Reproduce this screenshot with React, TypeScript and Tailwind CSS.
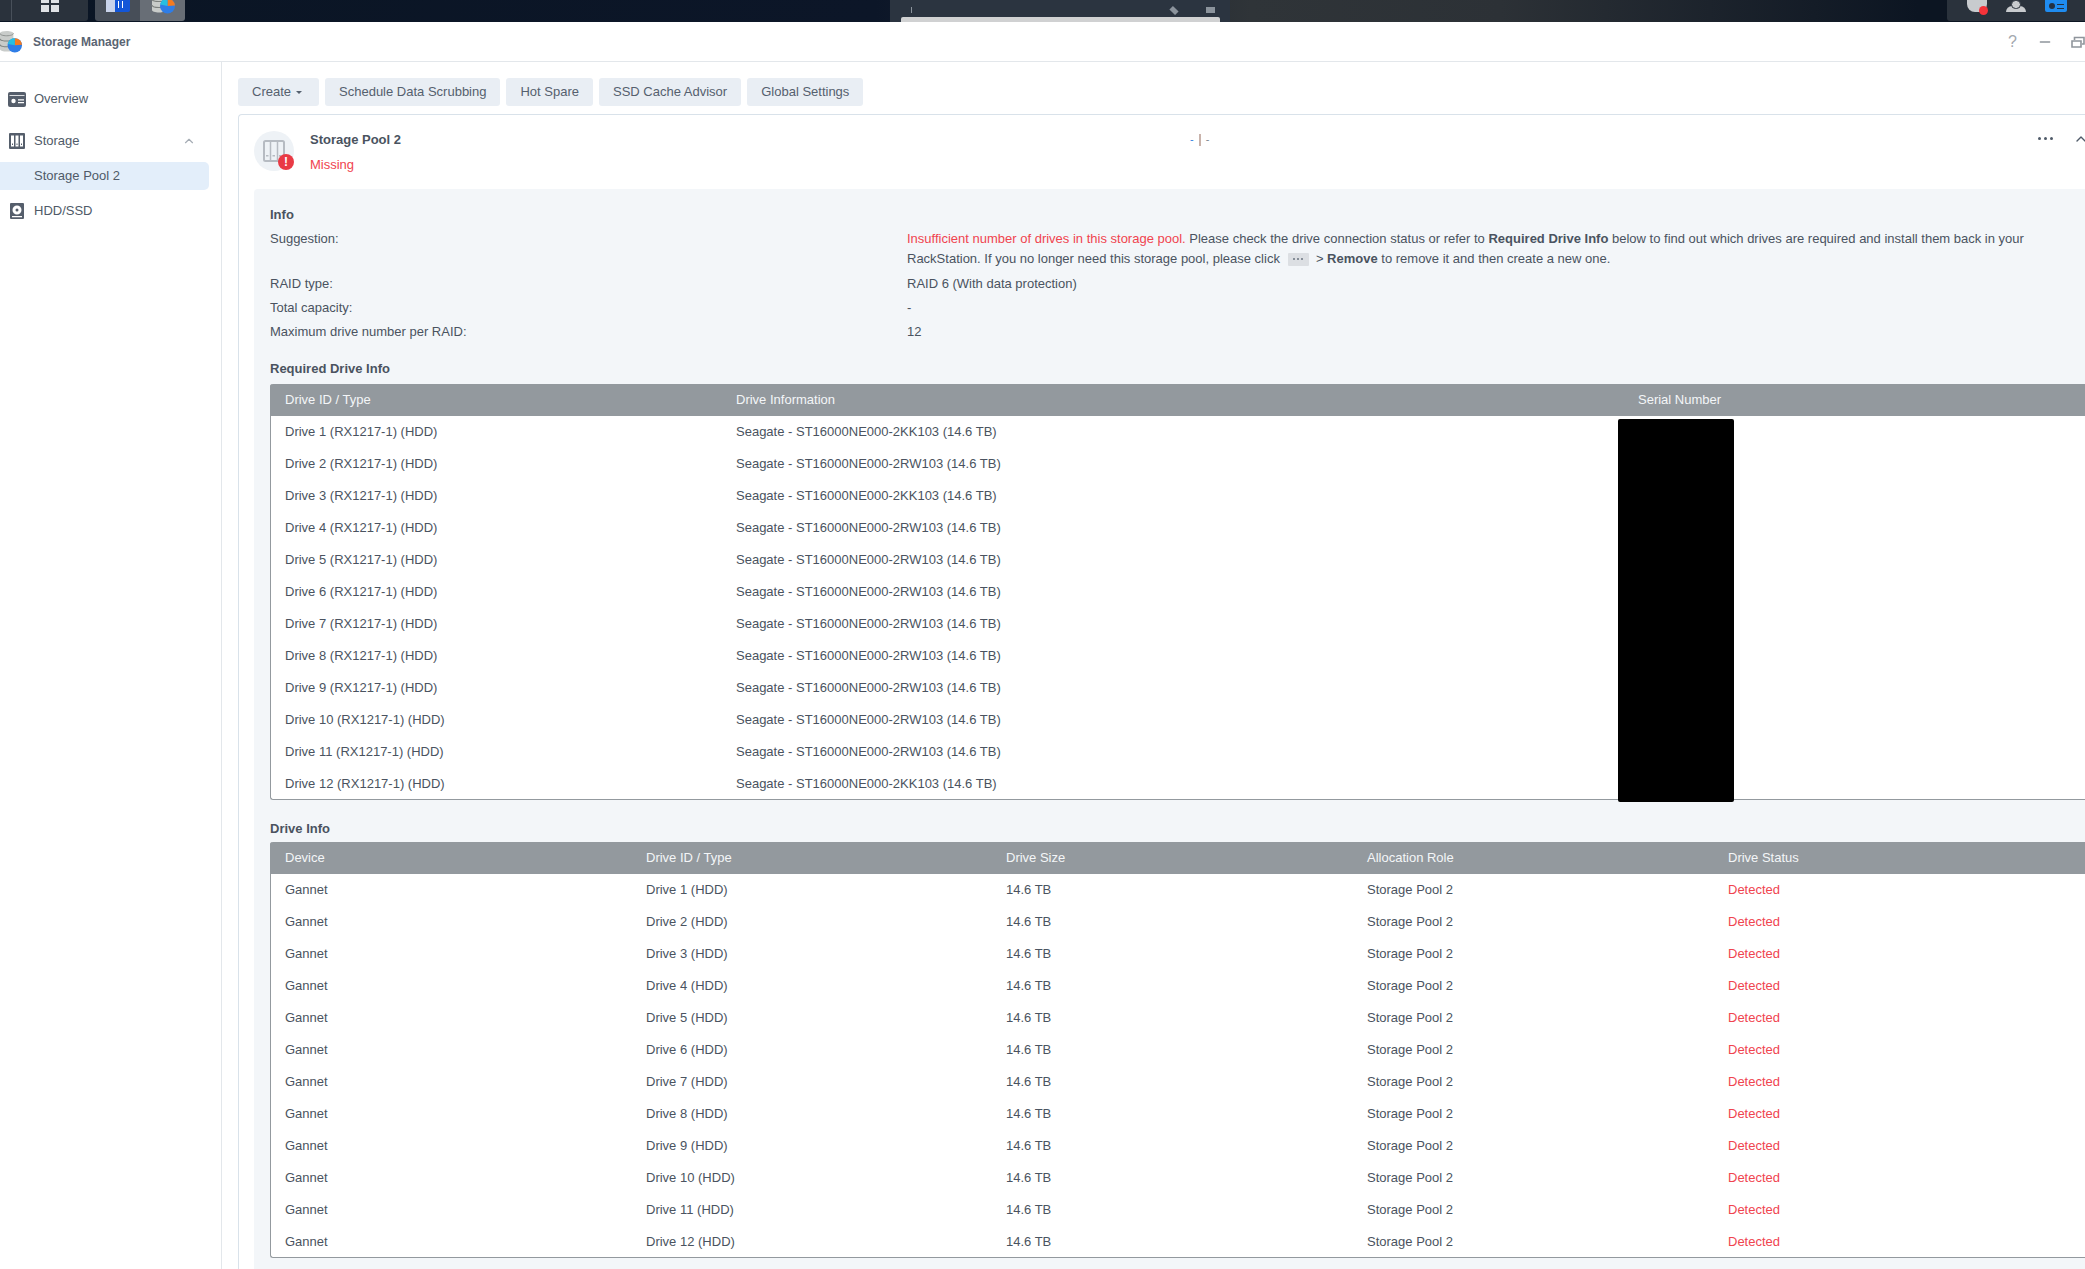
import { ChevronUp, Minus } from 'lucide-react'

const requiredDrives = [
  '2KK103', '2RW103', '2KK103', '2RW103', '2RW103', '2RW103',
  '2RW103', '2RW103', '2RW103', '2RW103', '2RW103', '2KK103',
]

function DbIcon({ className }: { className: string }) {
  return (
    <svg viewBox="0 0 24 24" className={className} aria-hidden="true">
      <path d="M1 3.5C1 2 4 1 8 1s7 1 7 2.500V20c0 1.500-3 2.500-7 2.500S1 21.500 1 20z" fill="#c9ccca" />
      <path d="M1 3.500C1 5 4 6 8 6s7-1 7-2.500" fill="none" stroke="#8d918f" strokeWidth="1" />
      <path d="M1 9c0 1.500 3 2.500 7 2.500S15 10.500 15 9M1 15c0 1.500 3 2.500 7 2.500s7-1 7-2.500" fill="none" stroke="#7d817f" strokeWidth="1.200" />
      <circle cx="16.500" cy="16" r="7.500" fill="#2f7de6" />
      <path d="M16.500 16V8.500a7.500 7.500 0 0 1 7.500 7z" fill="#f47b20" />
      <path d="M16.500 16 9.200 14.500a7.500 7.500 0 0 1 7.300-6z" fill="#27bfe0" />
    </svg>
  )
}

function TopBar() {
  return (
    <div className="flex h-[22px] overflow-hidden bg-[linear-gradient(90deg,#0a1524_0%,#0c1628_42%,#2f3438_60%,#2c3136_72%,#0c1522_92%)]">
      <div className="flex h-[21px] w-[88px] items-end rounded-br-[3px] bg-[#2a323c]">
        <div className="ml-[11px] h-full w-px bg-[#48505a]" />
        <div className="mb-[9px] ml-[29px] grid w-[18px] grid-cols-2 gap-[2px]">
          <span className="h-[3px] w-[8px] bg-[#dfe2e5]" />
          <span className="h-[3px] w-[8px] bg-[#dfe2e5]" />
          <span className="h-[7px] w-[8px] bg-[#dfe2e5]" />
          <span className="h-[7px] w-[8px] bg-[#dfe2e5]" />
        </div>
      </div>
      <div className="ml-[7px] flex h-[21px] w-[90px] overflow-hidden rounded-b-[3px]">
        <div className="flex w-[45px] items-start justify-center bg-[#474e58]">
          <div className="flex h-[12px] w-[24px] rounded-b-[2px] bg-[#1356d8]">
            <span className="w-[9px] bg-[#c9d3ea]" />
            <span className="ml-[3px] mt-[1px] h-[7px] w-px bg-white" />
            <span className="ml-[3px] mt-[1px] h-[7px] w-px bg-white" />
          </div>
        </div>
        <div className="flex w-[45px] items-start justify-center bg-[#686e76]">
          <DbIcon className="-mt-[10px] h-[24px] w-[24px]" />
        </div>
      </div>
      <div className="ml-[705px] flex h-[22px] w-[340px] flex-col items-center justify-end bg-[#2b3440]">
        <div className="mb-[4px] flex w-[320px] items-end pr-[5px] pl-[11px]">
          <span className="h-[6px] w-px bg-[#8b939c]" />
          <span className="ml-auto h-[5px] w-[8px] rotate-45 bg-[#8b939c]" />
          <span className="ml-[28px] h-[6px] w-[9px] bg-[#8b939c]" />
        </div>
        <div className="h-[5px] w-[319px] rounded-t-[2px] bg-[#d0d1d2]" />
      </div>
      <div className="ml-auto flex h-[21px] w-[138px] items-end rounded-bl-[3px] bg-[#2a323c]">
        <div className="relative mb-[9px] ml-[20px] h-[12px] w-[20px] rounded-b-[8px] bg-[#c8cbce]">
          <span className="absolute -bottom-[3px] left-[12px] h-[9px] w-[9px] rounded-full bg-[#f5333a]" />
        </div>
        <div className="relative mb-[9px] ml-[19px] h-[6px] w-[20px] rounded-t-[6px] bg-[#c8cbce]">
          <span className="absolute -top-[6px] left-[5px] h-[9px] w-[10px] rounded-full border border-[#2a323c] bg-[#c8cbce]" />
        </div>
        <div className="mb-[9px] ml-[19px] flex h-[12px] w-[22px] items-center gap-[2px] rounded-b-[2px] bg-[#1f8cf0] pl-[4px]">
          <span className="h-[6px] w-[6px] rounded-full bg-[#243142]" />
          <span className="h-[5px] w-[7px] border-y border-[#243142]" />
        </div>
      </div>
    </div>
  )
}

function SideItem({ icon, label, active }: { icon?: React.ReactNode; label: string; active?: boolean }) {
  return (
    <div className={`flex h-[28px] items-center text-[13px] text-[#4f5a68] ${active ? 'mr-3 rounded-r-[5px] bg-[#e3eefa]' : ''}`}>
      <span className="flex w-[34px] justify-center">{icon}</span>
      {label}
    </div>
  )
}

function Sidebar() {
  return (
    <aside className="w-[222px] shrink-0 border-r border-[#e3e7eb] pt-[23px]">
      <SideItem
        label="Overview"
        icon={
          <svg viewBox="0 0 18 15" className="h-[15px] w-[18px]" aria-hidden="true">
            <rect width="18" height="15" rx="2" fill="#555e6b" />
            <path d="M1.500 3.500h15" stroke="#fff" strokeWidth="0.800" />
            <circle cx="5.500" cy="9" r="2.200" fill="#fff" />
            <path d="M10 7.200h6v1.300h-6zM10 10h6v1.300h-6z" fill="#fff" />
          </svg>
        }
      />
      <div className="mt-[14px] flex items-center pr-[25px]">
        <div className="flex-1">
          <SideItem
            label="Storage"
            icon={
              <svg viewBox="0 0 16 16" className="h-[16px] w-[16px]" aria-hidden="true">
                <path fillRule="evenodd" d="M1 0h14a1 1 0 0 1 1 1v14a1 1 0 0 1-1 1H1a1 1 0 0 1-1-1V1a1 1 0 0 1 1-1zM2 2.500v11h3v-11zM6.500 2.500v11h3v-11zM11 2.500v11h3v-11z" fill="#555e6b" />
                <path d="M3 10.500h1V12H3zM7.500 10.500h1V12h-1zM12 10.500h1V12h-1z" fill="#555e6b" />
              </svg>
            }
          />
        </div>
        <ChevronUp className="h-[14px] w-[14px] text-[#a6adb5]" strokeWidth={2} aria-hidden="true" />
      </div>
      <div className="mt-[7px]">
        <SideItem label="Storage Pool 2" active />
      </div>
      <div className="mt-[7px]">
        <SideItem
          label="HDD/SSD"
          icon={
            <svg viewBox="0 0 14 16" className="h-[16px] w-[14px]" aria-hidden="true">
              <path fillRule="evenodd" d="M1 0h12a1 1 0 0 1 1 1v14a1 1 0 0 1-1 1H1a1 1 0 0 1-1-1V1a1 1 0 0 1 1-1zM7 2.500a4.500 4.500 0 1 0 0 9 4.500 4.500 0 0 0 0-9zM7 5.500a1.500 1.500 0 1 1 0 3 1.500 1.500 0 0 1 0-3zM2 13v1.200h10V13z" fill="#555e6b" />
            </svg>
          }
        />
      </div>
    </aside>
  )
}

function DriveTables() {
  return (
    <>
      <h3 className="mt-[20px] text-[13px] leading-[17px] font-bold">Required Drive Info</h3>
      <div className="relative mt-[7px] h-[416px] rounded-[3px] border-b border-l border-[#93999e] bg-white">
        <div className="-ml-px grid h-8 grid-cols-[451px_902px_1fr] items-center rounded-t-[3px] bg-[#93999e] pl-[14px] text-[#f4f6f8]">
          <span className="pl-px">Drive ID / Type</span>
          <span className="pl-px">Drive Information</span>
          <span className="pl-px">Serial Number</span>
        </div>
        {requiredDrives.map((model, i) => (
          <div key={i} className="-ml-px grid h-8 grid-cols-[451px_902px_1fr] items-center pl-[14px]">
            <span className="pl-px">Drive {i + 1} (RX1217-1) (HDD)</span>
            <span className="pl-px">Seagate - ST16000NE000-{model} (14.6 TB)</span>
            <span />
          </div>
        ))}
        {/* redaction block over the serial numbers */}
        <div className="absolute top-[35px] left-[1347px] h-[383px] w-[116px] rounded-[2px] bg-black" />
      </div>

      <h3 className="mt-[20px] text-[13px] leading-[17px] font-bold">Drive Info</h3>
      <div className="mt-[5px] h-[416px] rounded-[3px] border-b border-l border-[#93999e] bg-white">
        <div className="-ml-px grid h-8 grid-cols-[361px_360px_361px_361px_1fr] items-center rounded-t-[3px] bg-[#93999e] pl-[15px] text-[#f4f6f8]">
          <span>Device</span>
          <span>Drive ID / Type</span>
          <span>Drive Size</span>
          <span>Allocation Role</span>
          <span>Drive Status</span>
        </div>
        {requiredDrives.map((_, i) => (
          <div key={i} className="-ml-px grid h-8 grid-cols-[361px_360px_361px_361px_1fr] items-center pl-[15px]">
            <span>Gannet</span>
            <span>Drive {i + 1} (HDD)</span>
            <span>14.6 TB</span>
            <span>Storage Pool 2</span>
            <span className="text-[#f0444f]">Detected</span>
          </div>
        ))}
      </div>
    </>
  )
}

function PoolCard() {
  return (
    <section className="mt-2 w-[2000px] rounded-tl-[4px] border-t border-l border-[#d9e2ea] pt-4 pl-[15px]">
      <div className="flex h-[40px] items-start">
        <div className="relative flex h-[40px] w-[40px] shrink-0 items-center justify-center rounded-full bg-[#eef2f6]">
          <svg viewBox="0 0 22 22" className="h-[22px] w-[22px]" aria-hidden="true">
            <rect x="1" y="1" width="20" height="20" rx="1.500" fill="none" stroke="#b6bbc2" strokeWidth="2" />
            <path d="M7.500 1v20M14.500 1v20" stroke="#b6bbc2" strokeWidth="1.500" />
            <path d="M3 15h2.500v1.500H3zM9.500 15H12v1.500H9.500zM16 15h2.500v1.500H16z" fill="#b6bbc2" />
          </svg>
          <span className="absolute right-0 bottom-[1px] flex h-4 w-4 items-center justify-center rounded-full bg-[#e93a45] text-[12px] leading-none font-bold text-white">!</span>
        </div>
        <div className="ml-4 w-[880px]">
          <h2 className="text-[13px] leading-[17px] font-bold">Storage Pool 2</h2>
          <p className="mt-[8px] leading-[17px] text-[#f0444f]">Missing</p>
        </div>
        <div className="flex items-center text-[11px] leading-[17px]">
          <span className="text-[#2f7fe0]">-</span>
          <span className="mx-[5px] h-[12px] w-[2px] bg-[#c9b3ab]" />
          <span className="text-[#7d8791]">-</span>
        </div>
        <div className="mt-[6px] ml-[829px] flex gap-[3px]">
          <span className="h-[3px] w-[3px] rounded-full bg-[#4f5a68]" />
          <span className="h-[3px] w-[3px] rounded-full bg-[#4f5a68]" />
          <span className="h-[3px] w-[3px] rounded-full bg-[#4f5a68]" />
        </div>
        <ChevronUp className="ml-[20px] h-[16px] w-[16px] text-[#4f5a68]" strokeWidth={2} aria-hidden="true" />
      </div>

      <div className="mt-[18px] rounded-tl-[4px] bg-[#f3f6f9] px-4 pt-[17px] pb-[12px]">
        <h3 className="text-[13px] leading-[17px] font-bold">Info</h3>
        <div className="mt-[7px] grid grid-cols-[637px_1fr] gap-y-[7px] leading-[17px]">
          <span>Suggestion:</span>
          <p className="-my-px leading-5">
            <span className="text-[#f0444f]">Insufficient number of drives in this storage pool.</span> Please check the drive connection status or refer to <b>Required Drive Info</b> below to find out which drives are required and install them back in your
            <br />
            RackStation. If you no longer need this storage pool, please click
            <span className="mr-[7px] ml-[8px] inline-flex h-[13px] w-[21px] items-center justify-center gap-[2px] rounded-[1px] bg-[#dcdfe3] align-[3px]">
              <i className="h-[2px] w-[2px] rounded-full bg-[#6b7480]" />
              <i className="h-[2px] w-[2px] rounded-full bg-[#6b7480]" />
              <i className="h-[2px] w-[2px] rounded-full bg-[#6b7480]" />
            </span>
            &gt; <b>Remove</b> to remove it and then create a new one.
          </p>
          <span>RAID type:</span>
          <span>RAID 6 (With data protection)</span>
          <span>Total capacity:</span>
          <span>-</span>
          <span>Maximum drive number per RAID:</span>
          <span>12</span>
        </div>
        <DriveTables />
      </div>
    </section>
  )
}

export default function App() {
  return (
    <div className="h-[1269px] w-[2085px] overflow-hidden bg-white font-['Liberation_Sans',Arial,sans-serif] text-[13px] text-[#4a5360]">
      <TopBar />
      <header className="flex h-[40px] items-center overflow-hidden border-b border-[#e3e7eb]">
        <DbIcon className="-ml-px h-[23px] w-[23px] shrink-0" />
        <span className="ml-[11px] text-[12px] font-bold text-[#5a6472]">Storage Manager</span>
        <span className="ml-auto text-[16px] text-[#a3a8ae]">?</span>
        <Minus className="ml-[20px] h-[16px] w-[16px] text-[#8f959c]" strokeWidth={2} aria-hidden="true" />
        <svg viewBox="0 0 14 12" className="ml-[18px] h-[12px] w-[14px] shrink-0" aria-hidden="true">
          <path d="M1 5h9v6H1zM3.500 4V1.500H13V8h-2" fill="none" stroke="#8f959c" strokeWidth="1.600" />
        </svg>
      </header>
      <div className="flex h-[1207px]">
        <Sidebar />
        <main className="min-w-0 flex-1 overflow-hidden pt-4 pl-4">
          <div className="flex h-[28px] gap-[6px] text-[13px] text-[#55606e]">
            <button className="flex items-center gap-[5px] rounded-[3px] bg-[#e9eef4] pr-[17px] pl-[14px]">
              Create
              <span className="mt-[1px] h-0 w-0 border-x-[3px] border-t-[3px] border-x-transparent border-t-[#55606e]" />
            </button>
            <button className="rounded-[3px] bg-[#e9eef4] px-[14px]">Schedule Data Scrubbing</button>
            <button className="rounded-[3px] bg-[#e9eef4] px-[14px]">Hot Spare</button>
            <button className="rounded-[3px] bg-[#e9eef4] px-[14px]">SSD Cache Advisor</button>
            <button className="rounded-[3px] bg-[#e9eef4] px-[14px]">Global Settings</button>
          </div>
          <PoolCard />
        </main>
      </div>
    </div>
  )
}
